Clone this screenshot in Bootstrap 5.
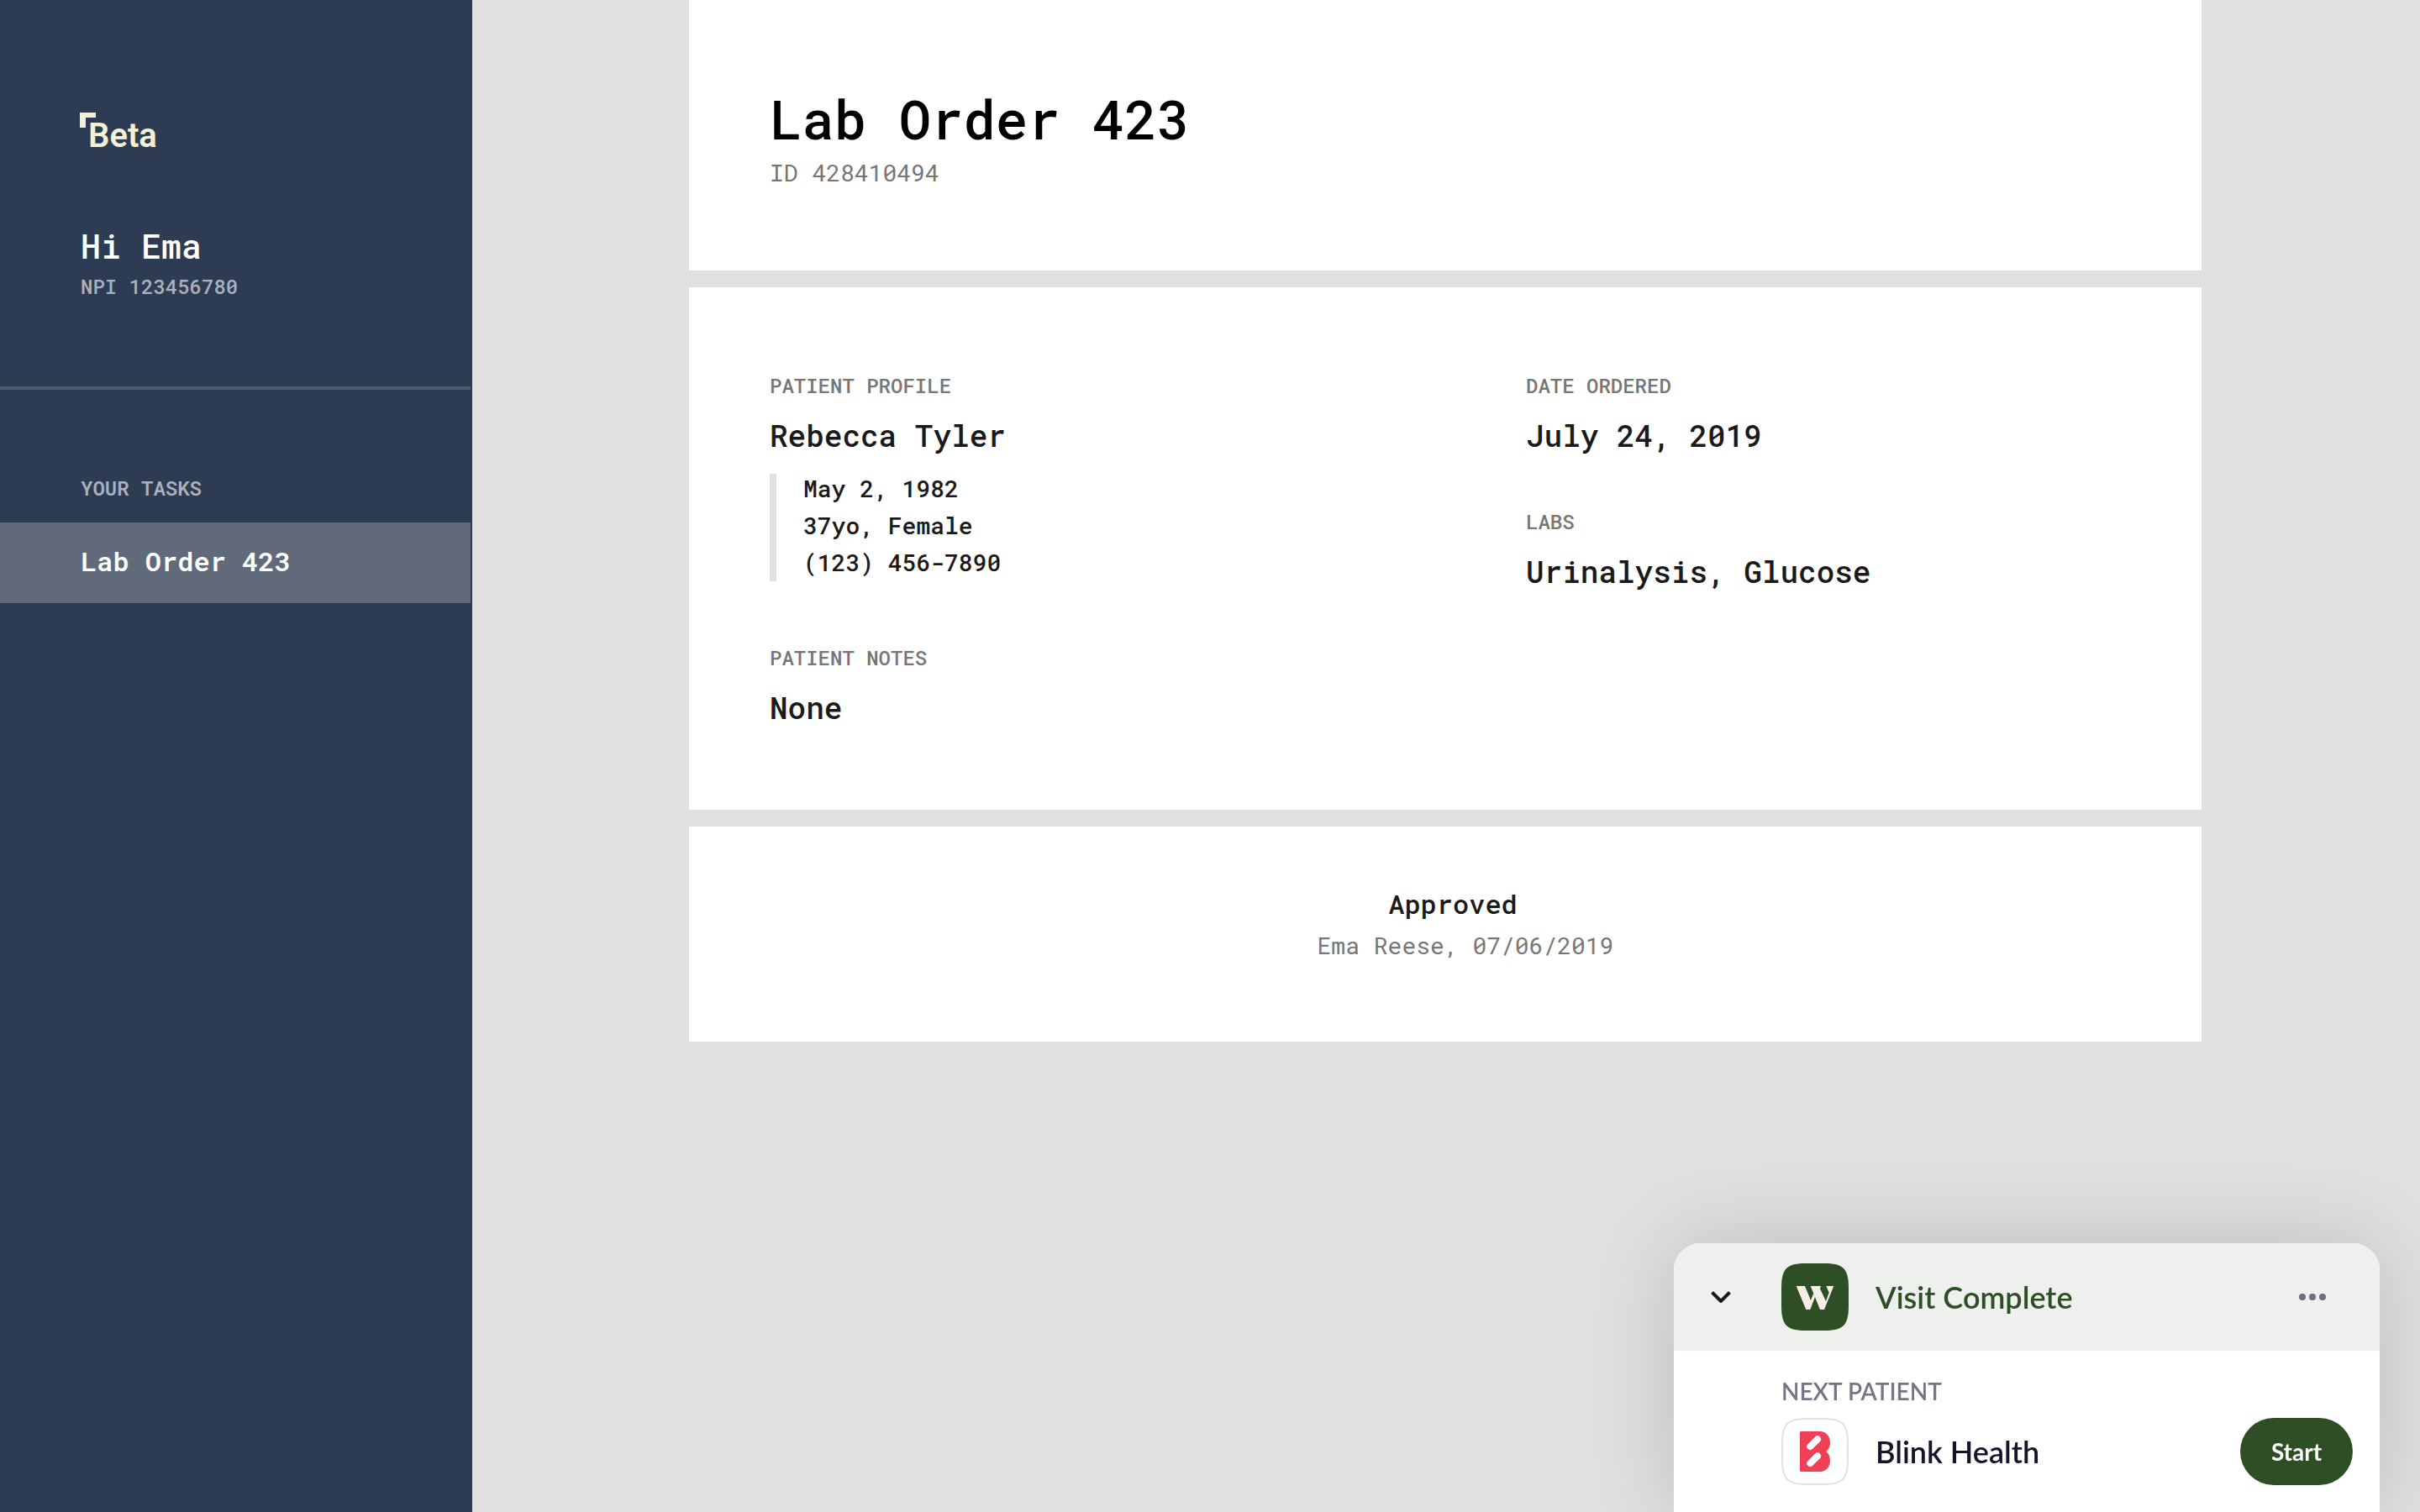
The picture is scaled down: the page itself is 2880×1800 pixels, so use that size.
<!DOCTYPE html>
<html lang="en">
<head>
<meta charset="utf-8">
<meta name="viewport" content="width=device-width, initial-scale=1">
<title>Lab Order 423</title>
<link href="https://cdn.jsdelivr.net/npm/bootstrap@5.3.0/dist/css/bootstrap.min.css" rel="stylesheet">
<style>
  :root {
    --navy: #2e3c53;
    --forest: #2e4f26;
    --page: #e0e0e0;
    --gutter: 96px;
  }
  body {
    background: var(--page);
    color: #1a1a1a;
    font-family: "Roboto Mono", "DejaVu Sans Mono", monospace;
  }
  .side-panel {
    flex: 0 0 560px;
    background: var(--navy);
    box-shadow: 2px 0 0 var(--navy);
    color: #fff;
  }
  .side-head { padding: 134px var(--gutter) 101px; border-bottom: 4px solid #4d5b6f; }
  .side-tasks { padding-top: 99px; }
  .brand-mark { display: block; margin-bottom: 91px; overflow: visible; }
  .brand-mark text { font: 600 40px Roboto, sans-serif; }
  .greeting { font-size: 40px; line-height: 48px; font-weight: 500; margin-bottom: 6px; }
  .field-label { font-size: 24px; line-height: 36px; font-weight: 500; color: #767676; }
  .side-panel .field-label { color: #abb1ba; }
  .task-title { padding: 0 var(--gutter); margin-bottom: 23px; font-weight: 600; }
  .task-link {
    padding: 22px var(--gutter) 26px;
    font-size: 32px; line-height: 48px; font-weight: 600;
    color: #fff; background: #606a7b;
    border-radius: 0;
  }
  .task-link:hover { color: #fff; }
  .sheets { max-width: 1800px; gap: 20px; }
  .sheet { background: #fff; }
  .sheet-head { padding: 101px var(--gutter) 98px; }
  .sheet-title { font-size: 64px; line-height: 80px; font-weight: 500; color: #000; margin-bottom: 7px; }
  .meta-line { font-size: 28px; line-height: 36px; color: #767676; }
  .sheet-body { padding: 99px 0 98px; }
  .sheet-col { padding: 0 var(--gutter); }
  .field-label + .field-value { margin-top: 17px; }
  .field-value { font-size: 36px; line-height: 48px; font-weight: 500; }
  .profile-lines {
    margin-top: 22px; margin-bottom: 73px; gap: 8px;
    padding: 0 0 4px 32px; border-left: 8px solid #e0e0e0;
    font-size: 28px; line-height: 36px; font-weight: 500;
  }
  .ordered { margin-bottom: 61px; }
  .sheet-status { padding: 68px var(--gutter) 96px; }
  .status-name { font-size: 32px; line-height: 48px; font-weight: 500; padding-left: 18px; margin-bottom: 8px; }
  .status-by { padding-left: 48px; }

  .visit-dock {
    position: fixed; right: 48px; bottom: 0; width: 840px;
    border-radius: 32px 32px 0 0; overflow: hidden;
    background: #fff; box-shadow: 0 0 96px rgba(0, 0, 0, .16);
    font-family: Lato, sans-serif;
  }
  .dock-head { background: #eef0ed; padding: 24px 52px 24px 28px; }
  .dock-body { padding: 30px 32px 32px 128px; }
  .dock-icon-btn { width: 56px; height: 56px; background: none; border: 0; padding: 0; }
  .dock-toggle { margin-right: 44px; }
  .dock-name { font-size: 36px; line-height: 48px; font-weight: 600; margin-left: 32px; color: #14142b; }
  .dock-head .dock-name { color: var(--forest); }
  .dock-label { font-size: 28px; line-height: 36px; font-weight: 600; color: #767584; margin-bottom: 14px; }
  .start-btn {
    height: 80px; min-width: 134px; padding: 0 32px; border-radius: 40px;
    background: var(--forest); border: 0; color: #fff;
    font-size: 28px; line-height: 36px; font-weight: 700;
  }
  .start-btn:hover { background: #254020; color: #fff; }
</style>
<script src="https://cdn.jsdelivr.net/npm/bootstrap@5.3.0/dist/js/bootstrap.bundle.min.js" defer></script>
</head>
<body>
<div class="d-flex min-vh-100">
  <aside class="side-panel">
    <header class="side-head">
      <svg class="brand-mark" width="96" height="44" viewBox="0 0 96 44" role="img" aria-label="Beta">
        <path d="M-1 0H18V6H6V18H-1Z" fill="#f2f1d8"/>
        <text x="9" y="41" fill="#f2f1d8">Beta</text>
      </svg>
      <h2 class="greeting">Hi Ema</h2>
      <div class="field-label">NPI 123456780</div>
    </header>
    <nav class="side-tasks">
      <h3 class="field-label task-title">YOUR TASKS</h3>
      <div class="nav flex-column">
        <a class="nav-link task-link" href="#order-423" aria-current="page">Lab Order 423</a>
      </div>
    </nav>
  </aside>

  <main class="flex-grow-1" id="order-423">
    <div class="sheets d-flex flex-column mx-auto">
      <section class="sheet sheet-head">
        <h1 class="sheet-title">Lab Order 423</h1>
        <div class="meta-line">ID 428410494</div>
      </section>

      <section class="sheet sheet-body">
        <div class="row g-0">
          <div class="col-6 sheet-col">
            <div class="field-label">PATIENT PROFILE</div>
            <div class="field-value">Rebecca Tyler</div>
            <div class="profile-lines d-flex flex-column">
              <span>May 2, 1982</span>
              <span>37yo, Female</span>
              <span>(123) 456-7890</span>
            </div>
            <div class="field-label">PATIENT NOTES</div>
            <div class="field-value">None</div>
          </div>
          <div class="col-6 sheet-col">
            <div class="ordered">
              <div class="field-label">DATE ORDERED</div>
              <div class="field-value">July 24, 2019</div>
            </div>
            <div class="field-label">LABS</div>
            <div class="field-value">Urinalysis, Glucose</div>
          </div>
        </div>
      </section>

      <section class="sheet sheet-status text-center">
        <div class="status-name">Approved</div>
        <div class="meta-line status-by">Ema Reese, 07/06/2019</div>
      </section>
    </div>
  </main>
</div>

<section class="visit-dock" aria-label="Visit">
  <div class="dock-head d-flex align-items-center">
    <button type="button" class="dock-icon-btn dock-toggle d-flex align-items-center justify-content-center" aria-label="Collapse">
      <svg width="24" height="14" viewBox="0 0 24 14"><path d="M1.5 1.5L12 12L22.5 1.5" fill="none" stroke="#1a1a1a" stroke-width="4"/></svg>
    </button>
    <svg width="80" height="80" viewBox="0 0 80 80" aria-hidden="true">
      <path d="M0 30C0 6 6 0 30 0H50C74 0 80 6 80 30V50C80 74 74 80 50 80H30C6 80 0 74 0 50Z" fill="#2e4f26"/>
      <path d="M17.700 27H28L35 44L38 36L40 40L34.300 55H29.300ZM34.700 27H47L46 30.300L53 45L56.700 34.700L53.300 27H62.300L51 55H46Z" fill="#f6efe9"/>
    </svg>
    <div class="dock-name">Visit Complete</div>
    <button type="button" class="dock-icon-btn ms-auto d-flex align-items-center justify-content-center" aria-label="More options">
      <svg width="32" height="8" viewBox="0 0 32 8" fill="#6e6e7d"><circle cx="4" cy="4" r="4"/><circle cx="16" cy="4" r="4"/><circle cx="28" cy="4" r="4"/></svg>
    </button>
  </div>
  <div class="dock-body">
    <div class="dock-label">NEXT PATIENT</div>
    <div class="d-flex align-items-center">
      <svg width="80" height="80" viewBox="0 0 80 80" aria-hidden="true">
        <path d="M1 30C1 7 7 1 30 1H50C73 1 79 7 79 30V50C79 73 73 79 50 79H30C7 79 1 73 1 50Z" fill="#fff" stroke="#e2e2e2" stroke-width="2"/>
        <path d="M23 16H46C53 16 58 22 58 29C58 34 56 38 53 40C56 42 58 46 58 51C58 58 53 64 46 64H23L22 63V17Z" fill="#ef4056"/>
        <path d="M34.300 34L43 25.300M34.300 54L43 45.300" stroke="#fff" stroke-width="8" stroke-linecap="round"/>
      </svg>
      <div class="dock-name">Blink Health</div>
      <button type="button" class="btn start-btn ms-auto">Start</button>
    </div>
  </div>
</section>
</body>
</html>
